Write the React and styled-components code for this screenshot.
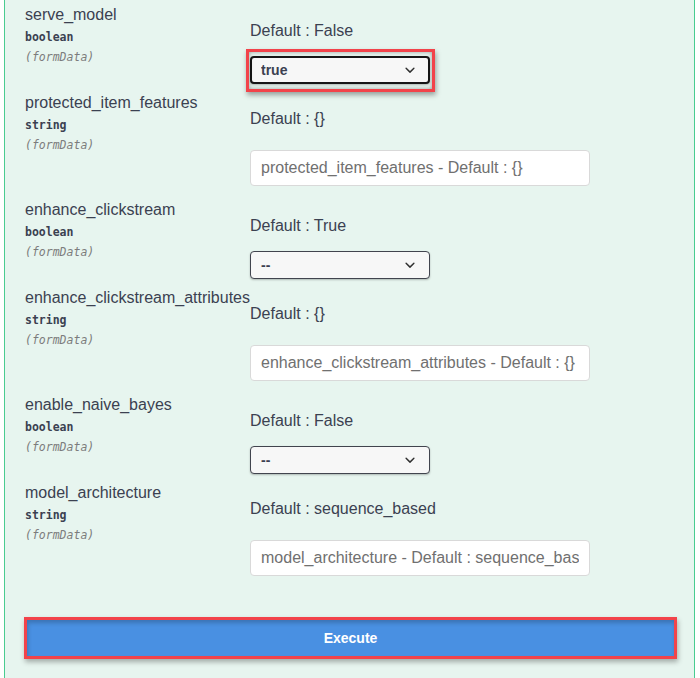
import React from "react";
import styled, { createGlobalStyle } from "styled-components";

const GlobalStyle = createGlobalStyle`
  html, body {
    margin: 0;
    padding: 0;
    background: #fff;
  }
  body {
    font-family: "Liberation Sans", Arial, sans-serif;
    color: #3b4151;
    overflow: hidden;
  }
`;

const params = [
  { name: "serve_model", type: "boolean", def: "False", value: "true", focused: true },
  { name: "protected_item_features", type: "string", def: "{}" },
  { name: "enhance_clickstream", type: "boolean", def: "True", value: "" },
  { name: "enhance_clickstream_attributes", type: "string", def: "{}" },
  { name: "enable_naive_bayes", type: "boolean", def: "False", value: "" },
  { name: "model_architecture", type: "string", def: "sequence_based" },
];

const Chevron = () => (
  <svg width="20" height="20" viewBox="0 0 20 20">
    <path
      fill="#303030"
      d="M13.418 7.859a.695.695 0 0 1 .978 0 .68.68 0 0 1 0 .969l-3.908 3.83a.697.697 0 0 1-.979 0l-3.908-3.83a.68.68 0 0 1 0-.969.695.695 0 0 1 .978 0L10 11l3.418-3.141z"
    />
  </svg>
);

const App = () => {
  return (
    <>
      <GlobalStyle />
      <Panel>
        {params.map((p) => (
          <Row key={p.name} $string={p.type === "string"}>
            <NameCell>
              <ParamName>{p.name}</ParamName>
              <ParamType>{p.type}</ParamType>
              <ParamIn>(formData)</ParamIn>
            </NameCell>
            <ValueCell>
              <DefaultText>Default : {p.def}</DefaultText>
              {p.type === "boolean" ? (
                <SelectWrap $highlight={p.focused}>
                  <Select defaultValue={p.value} $focused={p.focused}>
                    <option value="">--</option>
                    <option value="true">true</option>
                    <option value="false">false</option>
                  </Select>
                  <ArrowIcon>
                    <Chevron />
                  </ArrowIcon>
                </SelectWrap>
              ) : (
                <TextInput placeholder={`${p.name} - Default : ${p.def}`} />
              )}
            </ValueCell>
          </Row>
        ))}
        <ExecuteWrapper>
          <ExecuteButton>Execute</ExecuteButton>
        </ExecuteWrapper>
      </Panel>
    </>
  );
};

const Panel = styled.div`
  margin: -4px 0 0 4px;
  width: 691px;
  box-sizing: border-box;
  background: #e7f5ef;
  border-left: 1px solid #49cc90;
  border-right: 1px solid #49cc90;
`;

const Row = styled.div`
  display: grid;
  grid-template-columns: 225px 1fr;
  padding: 10px 0 ${({ $string }) => ($string ? "5px" : "0")} 20px;
`;

const NameCell = styled.div`
  display: flex;
  flex-direction: column;
  min-width: 0;
`;

const ParamName = styled.div`
  font-size: 16px;
  line-height: 18px;
  white-space: nowrap;
  color: #3b4151;
`;

const ParamType = styled.div`
  margin-top: 6px;
  font-family: "DejaVu Sans Mono", monospace;
  font-size: 11.5px;
  line-height: 14px;
  font-weight: 700;
  color: #3b4151;
`;

const ParamIn = styled.div`
  margin-top: 6px;
  font-family: "DejaVu Sans Mono", monospace;
  font-size: 11.5px;
  line-height: 14px;
  font-style: italic;
  color: #7c7c7c;
`;

const ValueCell = styled.div`
  display: flex;
  flex-direction: column;
  align-items: flex-start;
`;

const DefaultText = styled.p`
  margin: 16px 0 0;
  font-size: 16px;
  line-height: 18px;
  color: #3b4151;
`;

const SelectWrap = styled.div`
  position: relative;
  margin-top: 16px;
  width: 180px;
  height: 28px;

  &::after {
    content: "";
    display: ${({ $highlight }) => ($highlight ? "block" : "none")};
    position: absolute;
    top: -7px;
    left: -4px;
    right: -5px;
    bottom: -8px;
    border: 3px solid #f2434a;
    pointer-events: none;
    box-shadow: 1px 3px 5px rgba(0, 0, 0, 0.35),
      inset 0 0 4px rgba(0, 0, 0, 0.35);
  }
`;

const Select = styled.select`
  appearance: none;
  width: 100%;
  height: 28px;
  box-sizing: border-box;
  padding: 0 40px 0 ${({ $focused }) => ($focused ? "9px" : "10px")};
  font-family: "Liberation Sans", Arial, sans-serif;
  font-size: 14px;
  font-weight: 700;
  color: #3b4151;
  background: #f7f7f7;
  border: ${({ $focused }) => ($focused ? "2px solid #161616" : "1px solid #41444e")};
  border-radius: 4px;
  box-shadow: 0 1px 2px rgba(0, 0, 0, 0.25);
  outline: none;
`;

const ArrowIcon = styled.span`
  position: absolute;
  right: 10px;
  top: 4px;
  width: 20px;
  height: 20px;
  pointer-events: none;

  svg {
    display: block;
  }
`;

const TextInput = styled.input`
  margin-top: 22px;
  width: 340px;
  height: 36px;
  box-sizing: border-box;
  padding: 8px 10px;
  font-family: "Liberation Sans", Arial, sans-serif;
  font-size: 16px;
  color: #3b4151;
  background: #fff;
  border: 1px solid #d9d9d9;
  border-radius: 4px;
  outline: none;

  &::placeholder {
    color: #707070;
  }
`;

const ExecuteWrapper = styled.div`
  padding: 39px 20px 22px 22px;
`;

const ExecuteButton = styled.button`
  position: relative;
  display: block;
  width: 100%;
  height: 36px;
  box-sizing: border-box;
  font-family: "Liberation Sans", Arial, sans-serif;
  font-size: 14px;
  font-weight: 700;
  color: #fff;
  background: #4990e2;
  border: none;
  border-radius: 0;
  box-shadow: inset 1px 3px 4px rgba(0, 0, 0, 0.2);
  cursor: pointer;

  &::after {
    content: "";
    position: absolute;
    top: -3px;
    left: -3px;
    right: -3px;
    bottom: -3px;
    border: 3px solid #f2434a;
    box-shadow: 1px 3px 5px rgba(0, 0, 0, 0.3);
    pointer-events: none;
  }
`;

export default App;
